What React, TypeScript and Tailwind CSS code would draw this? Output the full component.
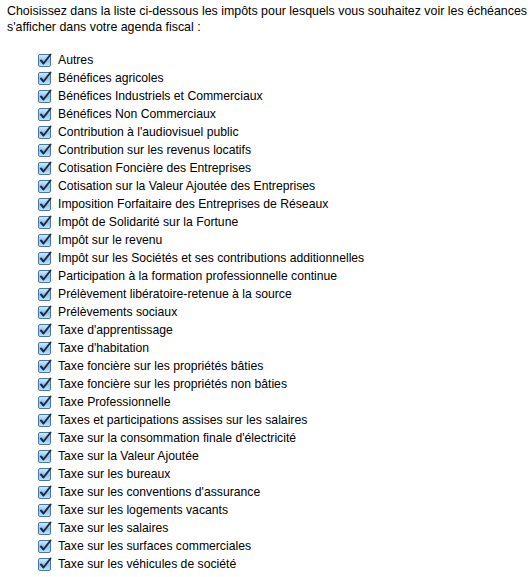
const items = [
  "Autres",
  "Bénéfices agricoles",
  "Bénéfices Industriels et Commerciaux",
  "Bénéfices Non Commerciaux",
  "Contribution à l'audiovisuel public",
  "Contribution sur les revenus locatifs",
  "Cotisation Foncière des Entreprises",
  "Cotisation sur la Valeur Ajoutée des Entreprises",
  "Imposition Forfaitaire des Entreprises de Réseaux",
  "Impôt de Solidarité sur la Fortune",
  "Impôt sur le revenu",
  "Impôt sur les Sociétés et ses contributions additionnelles",
  "Participation à la formation professionnelle continue",
  "Prélèvement libératoire-retenue à la source",
  "Prélèvements sociaux",
  "Taxe d'apprentissage",
  "Taxe d'habitation",
  "Taxe foncière sur les propriétés bâties",
  "Taxe foncière sur les propriétés non bâties",
  "Taxe Professionnelle",
  "Taxes et participations assises sur les salaires",
  "Taxe sur la consommation finale d'électricité",
  "Taxe sur la Valeur Ajoutée",
  "Taxe sur les bureaux",
  "Taxe sur les conventions d'assurance",
  "Taxe sur les logements vacants",
  "Taxe sur les salaires",
  "Taxe sur les surfaces commerciales",
  "Taxe sur les véhicules de société",
];

function CheckIcon() {
  return (
    <svg width="14" height="14" viewBox="0 0 14 14" className="shrink-0">
      <defs>
        <linearGradient id="cbg" x1="0" y1="0" x2="0" y2="1">
          <stop offset="0" stopColor="#d7ecfb" />
          <stop offset="0.5" stopColor="#8cc4ee" />
          <stop offset="1" stopColor="#c4e4fb" />
        </linearGradient>
      </defs>
      <rect x="0.5" y="1.5" width="12" height="12" rx="1.5" fill="url(#cbg)" stroke="#4a78a8" />
      <path d="M3 7.5 L5.5 10.5 L12.5 1.5" fill="none" stroke="#1d2a44" strokeWidth="2" strokeLinecap="round" strokeLinejoin="round" />
    </svg>
  );
}

export default function App() {
  return (
    <div className="w-[532px] min-h-[577px] bg-white pl-[7px] pt-[3px] text-[12.2px] leading-[16px] text-black" style={{ fontFamily: '"Liberation Sans", Arial, sans-serif' }}>
      <p className="text-[12.4px] whitespace-nowrap">
        Choisissez dans la liste ci-dessous les impôts pour lesquels vous souhaitez voir les échéances
        <br />
        s'afficher dans votre agenda fiscal :
      </p>
      <ul className="mt-[16px] pl-[31px]">
        {items.map((t) => (
          <li key={t} className="flex items-center gap-[6px] h-[18px]">
            <CheckIcon />
            <span>{t}</span>
          </li>
        ))}
      </ul>
    </div>
  );
}
